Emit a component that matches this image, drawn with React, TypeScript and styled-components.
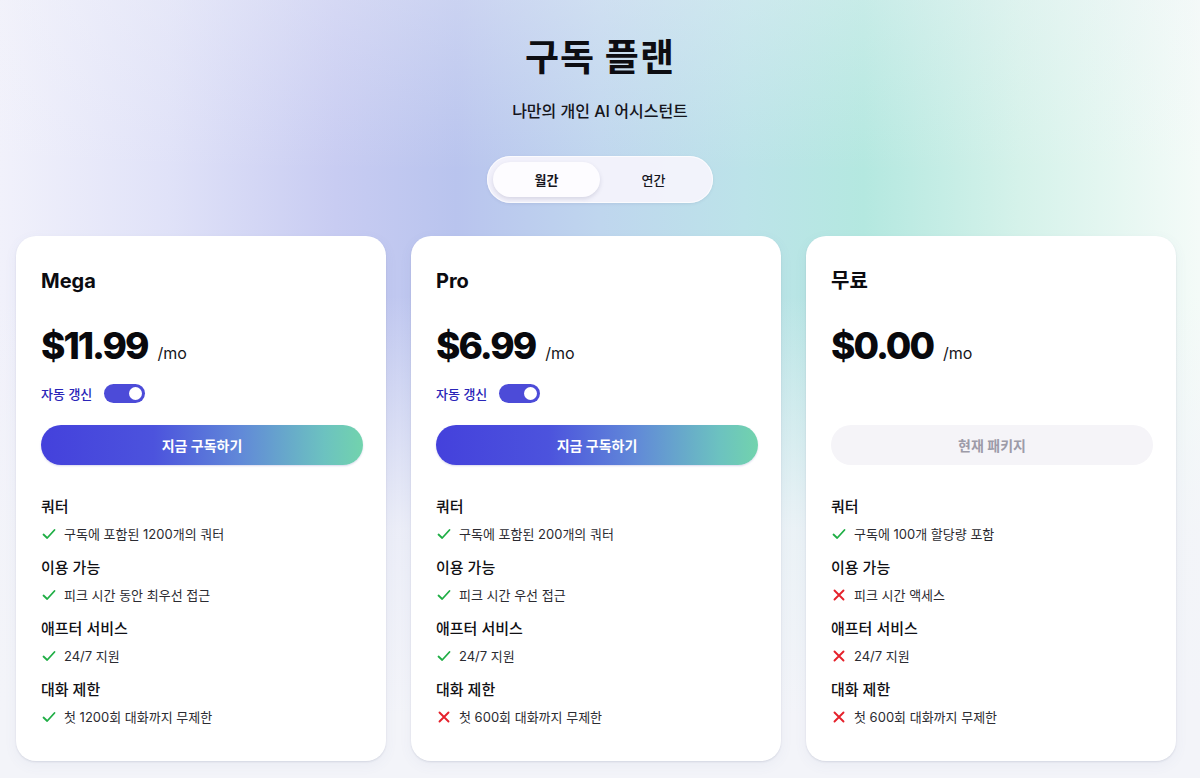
import * as React from "react";
import styled, { createGlobalStyle } from "styled-components";

type Feature = { ok: boolean; text: string };
type Section = { title: string; item: Feature };
type Plan = {
  name: string;
  price: string;
  current?: boolean;
  sections: Section[];
};

const plans: Plan[] = [
  {
    name: "Mega",
    price: "$11.99",
    sections: [
      { title: "쿼터", item: { ok: true, text: "구독에 포함된 1200개의 쿼터" } },
      { title: "이용 가능", item: { ok: true, text: "피크 시간 동안 최우선 접근" } },
      { title: "애프터 서비스", item: { ok: true, text: "24/7 지원" } },
      { title: "대화 제한", item: { ok: true, text: "첫 1200회 대화까지 무제한" } },
    ],
  },
  {
    name: "Pro",
    price: "$6.99",
    sections: [
      { title: "쿼터", item: { ok: true, text: "구독에 포함된 200개의 쿼터" } },
      { title: "이용 가능", item: { ok: true, text: "피크 시간 우선 접근" } },
      { title: "애프터 서비스", item: { ok: true, text: "24/7 지원" } },
      { title: "대화 제한", item: { ok: false, text: "첫 600회 대화까지 무제한" } },
    ],
  },
  {
    name: "무료",
    price: "$0.00",
    current: true,
    sections: [
      { title: "쿼터", item: { ok: true, text: "구독에 100개 할당량 포함" } },
      { title: "이용 가능", item: { ok: false, text: "피크 시간 액세스" } },
      { title: "애프터 서비스", item: { ok: false, text: "24/7 지원" } },
      { title: "대화 제한", item: { ok: false, text: "첫 600회 대화까지 무제한" } },
    ],
  },
];

function Check() {
  return (
    <svg width="14" height="14" viewBox="0 0 14 14" fill="none">
      <path d="M1.5 7.5 L5.2 11 L12.5 3" stroke="#1fae45" strokeWidth="1.8" strokeLinecap="round" strokeLinejoin="round" />
    </svg>
  );
}

function Cross() {
  return (
    <svg width="14" height="14" viewBox="0 0 14 14" fill="none">
      <path d="M2.5 2.5 L11.5 11.5 M11.5 2.5 L2.5 11.5" stroke="#e5212b" strokeWidth="1.9" strokeLinecap="round" />
    </svg>
  );
}

export default function App() {
  const [period, setPeriod] = React.useState<"m" | "y">("m");
  return (
    <>
      <GlobalStyle />
      <Page>
        <Header>
          <Title>구독 플랜</Title>
          <Subtitle>나만의 개인 AI 어시스턴트</Subtitle>
          <Segment>
            <SegButton active={period === "m"} onClick={() => setPeriod("m")}>
              월간
            </SegButton>
            <SegButton active={period === "y"} onClick={() => setPeriod("y")}>
              연간
            </SegButton>
          </Segment>
        </Header>
        <Cards>
          {plans.map((p) => (
            <Card key={p.name}>
              <PlanName>{p.name}</PlanName>
              <PriceRow>
                <Price>{p.price}</Price>
                <Per>/mo</Per>
              </PriceRow>
              <RenewRow hidden={p.current}>
                <RenewLabel>자동 갱신</RenewLabel>
                <Switch>
                  <Knob />
                </Switch>
              </RenewRow>
              {p.current ? (
                <CurrentButton>현재 패키지</CurrentButton>
              ) : (
                <BuyButton>지금 구독하기</BuyButton>
              )}
              <Features>
                {p.sections.map((s) => (
                  <FeatureGroup key={s.title}>
                    <GroupTitle>{s.title}</GroupTitle>
                    <Item>
                      <IconBox>{s.item.ok ? <Check /> : <Cross />}</IconBox>
                      {s.item.text}
                    </Item>
                  </FeatureGroup>
                ))}
              </Features>
            </Card>
          ))}
        </Cards>
      </Page>
    </>
  );
}

const GlobalStyle = createGlobalStyle`
  * { box-sizing: border-box; }
  body {
    margin: 0;
    font-family: "Inter", "Noto Sans CJK KR", sans-serif;
    color: #111;
    background: #f3f4f9;
  }
`;

const Page = styled.div`
  width: 1200px;
  height: 778px;
  overflow: hidden;
  background:
    linear-gradient(180deg, rgba(243, 244, 249, 0.3) 0%, rgba(243, 244, 249, 0) 22%, rgba(243, 244, 249, 0) 38%, rgba(243, 244, 249, 0.85) 68%, #f3f4f9 92%),
    linear-gradient(90deg, #f1f1fb 0%, #e0e2f8 14%, #c8ccf2 28%, #b9c4ee 38%, #bfd6ee 50%, #bce3e9 62%, #b4e8e0 72%, #d5f2ea 85%, #f4fbf8 100%);
`;

const Header = styled.header`
  display: flex;
  flex-direction: column;
  align-items: center;
  padding-top: 35px;
`;

const Title = styled.h1`
  margin: 0;
  font-size: 37px;
  line-height: 46px;
  font-weight: 700;
  letter-spacing: 1px;
  color: #0d0d12;
`;

const Subtitle = styled.p`
  margin: 19px 0 0;
  font-size: 16px;
  line-height: 22px;
  font-weight: 500;
  color: #15151c;
`;

const Segment = styled.div`
  margin-top: 34px;
  width: 226px;
  height: 47px;
  padding: 6px;
  display: flex;
  border-radius: 24px;
  background: rgba(246, 244, 252, 0.92);
  box-shadow: 0 1px 3px rgba(80, 90, 140, 0.12), inset 0 0 0 1px rgba(255, 255, 255, 0.7);
`;

const SegButton = styled.button<{ active: boolean }>`
  flex: 1;
  border: none;
  border-radius: 18px;
  font-family: inherit;
  font-size: 13px;
  font-weight: ${(p) => (p.active ? 700 : 500)};
  color: #16161d;
  cursor: pointer;
  background: ${(p) => (p.active ? "#fdfcff" : "transparent")};
  box-shadow: ${(p) => (p.active ? "0 2px 4px rgba(90, 90, 130, 0.18)" : "none")};
`;

const Cards = styled.div`
  margin-top: 33px;
  padding: 0 24px 0 16px;
  display: grid;
  grid-template-columns: repeat(3, 370px);
  gap: 25px;
`;

const Card = styled.div`
  height: 525px;
  padding: 32px 24px 0 25px;
  background: #fff;
  border-radius: 20px;
  box-shadow: 0 1px 2px rgba(40, 50, 90, 0.12), 0 4px 14px rgba(90, 100, 160, 0.06);
  display: flex;
  flex-direction: column;
`;

const PlanName = styled.div`
  font-size: 20px;
  line-height: 26px;
  font-weight: 700;
  color: #0b0b10;
`;

const PriceRow = styled.div`
  margin-top: 27px;
  display: flex;
  align-items: baseline;
  gap: 10px;
`;

const Price = styled.span`
  font-size: 37px;
  line-height: 50px;
  font-weight: 800;
  letter-spacing: -2px;
  color: #09090d;
`;

const Per = styled.span`
  font-size: 16px;
  font-weight: 400;
  color: #15151a;
`;

const RenewRow = styled.div<{ hidden?: boolean }>`
  margin-top: 12px;
  height: 20px;
  display: flex;
  align-items: center;
  gap: 12px;
  visibility: ${(p) => (p.hidden ? "hidden" : "visible")};
`;

const RenewLabel = styled.span`
  font-size: 13px;
  font-weight: 500;
  color: #2a25b8;
`;

const Switch = styled.div`
  position: relative;
  width: 41px;
  height: 19px;
  border-radius: 10px;
  background: #4c4bd8;
`;

const Knob = styled.div`
  position: absolute;
  right: 3px;
  top: 3px;
  width: 13px;
  height: 13px;
  border-radius: 50%;
  background: #fff;
`;

const BuyButton = styled.button`
  margin-top: 22px;
  height: 40px;
  width: 322px;
  border: none;
  border-radius: 20px;
  font-family: inherit;
  font-size: 14px;
  font-weight: 700;
  color: #fff;
  cursor: pointer;
  background: linear-gradient(90deg, #4441dc 0%, #4c53dd 35%, #6189d8 62%, #6cc2c0 88%, #72d3ad 100%);
  box-shadow: 0 1px 2px rgba(60, 60, 160, 0.2);
`;

const CurrentButton = styled.button`
  margin-top: 22px;
  height: 40px;
  width: 322px;
  border: none;
  border-radius: 20px;
  font-family: inherit;
  font-size: 14px;
  font-weight: 600;
  color: #9d9ba8;
  background: #f5f4f8;
`;

const Features = styled.div`
  margin-top: 32px;
  display: flex;
  flex-direction: column;
  gap: 15px;
`;

const FeatureGroup = styled.div`
  display: flex;
  flex-direction: column;
  gap: 8px;
`;

const GroupTitle = styled.div`
  font-size: 15px;
  line-height: 20px;
  font-weight: 500;
  color: #101014;
`;

const Item = styled.div`
  display: flex;
  align-items: center;
  gap: 8px;
  font-size: 13px;
  line-height: 18px;
  color: #2b2b31;
`;

const IconBox = styled.span`
  display: inline-flex;
  width: 14px;
  height: 14px;
  margin-left: 1px;
`;
